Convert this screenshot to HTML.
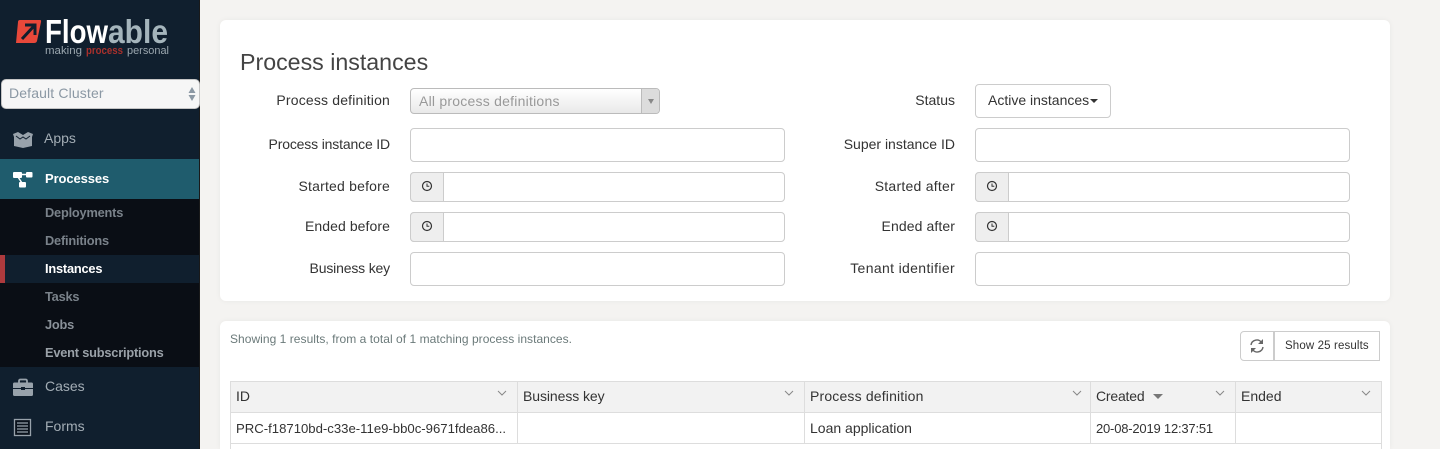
<!DOCTYPE html>
<html><head><meta charset="utf-8">
<style>
*{box-sizing:border-box}
html,body{margin:0;padding:0}
body{width:1440px;height:449px;overflow:hidden;position:relative;background:#f4f3f1;font-family:"Liberation Sans",sans-serif;font-size:14px;color:#333}
.a{position:absolute}
.t{position:absolute;white-space:nowrap;line-height:18px}
.r{text-align:right;width:180px}
.in{position:absolute;background:#fff;border:1px solid #ccc;border-radius:4px}
.nav{color:#a3adb5;font-size:14px}
.sub{font-size:12.8px;font-weight:bold;letter-spacing:-.2px;line-height:17px}
.addon{position:absolute;background:#eee;border:1px solid #ccc;border-radius:4px 0 0 4px;width:34px;height:30px}
.th{position:absolute;top:381px;height:32px;background:#f2f2f2;border:1px solid #ddd;font-size:14px;line-height:28px;padding-left:5px;color:#333}
.td{position:absolute;top:413px;height:31px;background:#fff;border-right:1px solid #ddd;border-bottom:1px solid #ddd;font-size:14px;line-height:31px;padding-left:5px;white-space:nowrap;overflow:hidden}
</style></head><body>
<div class="a" style="left:0;top:0;width:200px;height:449px;background:#101f2e"></div>
<div class="a" style="left:199px;top:0;width:1px;height:449px;background:#1a1a1a"></div>

<svg class="a" style="left:0;top:0" width="190" height="60" viewBox="0 0 190 60">
<path d="M20 20H40Q41.500 20 41 22L37 41Q36.500 43 34 43H16L18 22Q18 20 20 20Z" fill="#e8483a"/>
<path d="M22 39L34 26M25 25H35V35" fill="none" stroke="#101f2e" stroke-width="3"/>
<text x="45" y="43" font-family="Liberation Sans" font-weight="bold" font-size="33" fill="#fff" textLength="63" lengthAdjust="spacingAndGlyphs">Flow</text>
<text x="108" y="43" font-family="Liberation Sans" font-weight="bold" font-size="33" fill="#a5b5bc" textLength="60" lengthAdjust="spacingAndGlyphs">able</text>
<text x="45" y="54" font-family="Liberation Sans" font-size="11" fill="#9aa6ae" textLength="37" lengthAdjust="spacingAndGlyphs">making</text>
<text x="86" y="54" font-family="Liberation Sans" font-weight="bold" font-size="11" fill="#a8302c" textLength="37" lengthAdjust="spacingAndGlyphs">process</text>
<text x="127" y="54" font-family="Liberation Sans" font-size="11" fill="#9aa6ae" textLength="42" lengthAdjust="spacingAndGlyphs">personal</text>
</svg>

<div class="a" style="left:1px;top:79px;width:199px;height:30px;background:#f6f6f6;border:1px solid #c5c5c5;border-radius:5px"></div>
<div class="t" style="left:9px;top:84px;color:#8b98a4;font-size:14px;letter-spacing:.14px">Default Cluster</div>
<svg class="a" style="left:187px;top:86px" width="10" height="16"><path d="M5 1L8.500 7H1.500Z M5 15L8.500 9H1.500Z" fill="#8b98a4"/></svg>

<svg class="a" style="left:12px;top:131px" width="22" height="18"><path d="M1 3L6 1L11 4L16 1L21 3L20 6V15L11 17L2 15V6Z" fill="#98a2ab"/><path d="M4 5L8 8L11 6L14 8L18 5" stroke="#101f2e" stroke-width="1" fill="none"/></svg>
<div class="t nav" style="left:44px;top:129px">Apps</div>

<div class="a" style="left:0;top:159px;width:199px;height:40px;background:#1f5c6d"></div>
<svg class="a" style="left:12px;top:170px" width="22" height="20"><rect x="1" y="2" width="9" height="6" rx="1" fill="#fff"/><rect x="14" y="2" width="6.500" height="5.500" rx="1" fill="#fff"/><rect x="7" y="12" width="7" height="5.500" rx="1" fill="#fff"/><path d="M8 4.500H16M6 7L10 13" stroke="#fff" stroke-width="1.500"/></svg>
<div class="t" style="left:45px;top:170px;color:#fff;font-size:13px;font-weight:bold;letter-spacing:-.1px">Processes</div>

<div class="a" style="left:0;top:199px;width:199px;height:168px;background:#0a0e15"></div>
<div class="a" style="left:0;top:255px;width:199px;height:28px;background:#101f2e"></div>
<div class="a" style="left:0;top:255px;width:5px;height:28px;background:#ad3a3d"></div>
<div class="t sub" style="left:45px;top:204px;color:#7a828a">Deployments</div>
<div class="t sub" style="left:45px;top:232px;color:#7a828a">Definitions</div>
<div class="t sub" style="left:45px;top:260px;color:#fff">Instances</div>
<div class="t sub" style="left:45px;top:288px;color:#7a828a">Tasks</div>
<div class="t sub" style="left:45px;top:316px;color:#8a9199">Jobs</div>
<div class="t sub" style="left:45px;top:344px;color:#9aa1a8">Event subscriptions</div>

<svg class="a" style="left:12px;top:378px" width="22" height="19"><path d="M7 5V3Q7 1.500 8.500 1.500H13.500Q15 1.500 15 3V5" fill="none" stroke="#98a2ab" stroke-width="1.800"/><rect x="1" y="4.500" width="20" height="13.500" rx="1.500" fill="#98a2ab"/><rect x="1" y="10" width="20" height="1" fill="#101f2e"/><rect x="9" y="9" width="4" height="3" fill="#101f2e"/></svg>
<div class="t nav" style="left:45px;top:377px">Cases</div>
<svg class="a" style="left:13px;top:418px" width="20" height="19"><rect x="1.500" y="1.500" width="16" height="16" fill="#0a121c" stroke="#98a2ab" stroke-width="1.300"/><path d="M4 5H15M4 8H15M4 11H15M4 14H15" stroke="#98a2ab" stroke-width="1.200"/></svg>
<div class="t nav" style="left:45px;top:417px">Forms</div>

<div class="a" style="left:220px;top:20px;width:1170px;height:281px;background:#fff;border-radius:6px;box-shadow:0 0 6px rgba(0,0,0,.05)"></div>
<div class="t" style="left:240px;top:47px;font-size:23.200px;line-height:30px;color:#444">Process instances</div>

<div class="t r" style="left:210px;top:91px;letter-spacing:.17px">Process definition</div>
<div class="a" style="left:410px;top:88px;width:250px;height:26px;border:1px solid #bbb;border-radius:4px;background:linear-gradient(#fff,#e9e9e9)"></div>
<div class="a" style="left:641px;top:89px;width:18px;height:24px;border-left:1px solid #bbb;background:#dcdcdc;border-radius:0 3px 3px 0"></div>
<svg class="a" style="left:647px;top:98px" width="8" height="7"><path d="M1 1H7L4 6Z" fill="#888"/></svg>
<div class="t" style="left:419px;top:92px;color:#999;letter-spacing:.23px">All process definitions</div>

<div class="t r" style="left:775px;top:91px">Status</div>
<div class="in" style="left:975px;top:84px;width:136px;height:34px"></div>
<div class="t" style="left:988px;top:91px">Active instances</div>
<svg class="a" style="left:1090px;top:99px" width="9" height="5"><path d="M0 0H8L4 4Z" fill="#333"/></svg>

<div class="t r" style="left:210px;top:135px;letter-spacing:-.16px">Process instance ID</div>
<div class="in" style="left:410px;top:128px;width:375px;height:34px"></div>
<div class="t r" style="left:775px;top:135px">Super instance ID</div>
<div class="in" style="left:975px;top:128px;width:375px;height:34px"></div>

<div class="t r" style="left:210px;top:177px;letter-spacing:.2px">Started before</div>
<div class="in" style="left:410px;top:172px;width:375px;height:30px"></div>
<div class="addon" style="left:410px;top:172px"></div>
<svg class="a" style="left:421px;top:180px" width="12" height="12"><circle cx="6" cy="6" r="4.500" fill="none" stroke="#333" stroke-width="1.200"/><path d="M6 3.500V6.200H8.300" fill="none" stroke="#333"/></svg>
<div class="t r" style="left:775px;top:177px;letter-spacing:.25px">Started after</div>
<div class="in" style="left:975px;top:172px;width:375px;height:30px"></div>
<div class="addon" style="left:975px;top:172px"></div>
<svg class="a" style="left:986px;top:180px" width="12" height="12"><circle cx="6" cy="6" r="4.500" fill="none" stroke="#333" stroke-width="1.200"/><path d="M6 3.500V6.200H8.300" fill="none" stroke="#333"/></svg>

<div class="t r" style="left:210px;top:217px;letter-spacing:.08px">Ended before</div>
<div class="in" style="left:410px;top:212px;width:375px;height:30px"></div>
<div class="addon" style="left:410px;top:212px"></div>
<svg class="a" style="left:421px;top:220px" width="12" height="12"><circle cx="6" cy="6" r="4.500" fill="none" stroke="#333" stroke-width="1.200"/><path d="M6 3.500V6.200H8.300" fill="none" stroke="#333"/></svg>
<div class="t r" style="left:775px;top:217px;letter-spacing:.1px">Ended after</div>
<div class="in" style="left:975px;top:212px;width:375px;height:30px"></div>
<div class="addon" style="left:975px;top:212px"></div>
<svg class="a" style="left:986px;top:220px" width="12" height="12"><circle cx="6" cy="6" r="4.500" fill="none" stroke="#333" stroke-width="1.200"/><path d="M6 3.500V6.200H8.300" fill="none" stroke="#333"/></svg>

<div class="t r" style="left:210px;top:259px;letter-spacing:-.17px">Business key</div>
<div class="in" style="left:410px;top:252px;width:375px;height:34px"></div>
<div class="t r" style="left:775px;top:259px;letter-spacing:.35px">Tenant identifier</div>
<div class="in" style="left:975px;top:252px;width:375px;height:34px"></div>

<div class="a" style="left:220px;top:321px;width:1170px;height:128px;background:#fff;border-radius:6px 6px 0 0;box-shadow:0 0 6px rgba(0,0,0,.05)"></div>
<div class="t" style="left:230px;top:330px;font-size:12px;color:#6b7a7a;letter-spacing:.04px">Showing 1 results, from a total of 1 matching process instances.</div>

<div class="in" style="left:1240px;top:331px;width:34px;height:30px;border-radius:4px 0 0 4px"></div>
<svg class="a" style="left:1249px;top:338px" width="16" height="16"><path d="M2 7A5.800 5.800 0 0 1 12.500 4.500M14 9A5.800 5.800 0 0 1 3.500 11.500" fill="none" stroke="#666" stroke-width="1.400"/><path d="M14 1V6H9ZM2 15V10H7Z" fill="#666"/></svg>
<div class="in" style="left:1274px;top:331px;width:106px;height:30px;border-radius:0"></div>
<div class="t" style="left:1285px;top:337px;font-size:11.500px;letter-spacing:.13px">Show 25 results</div>

<div class="th" style="left:230px;width:288px">ID</div>
<div class="th" style="left:517px;width:288px;letter-spacing:-.08px">Business key</div>
<div class="th" style="left:804px;width:287px;letter-spacing:.17px">Process definition</div>
<div class="th" style="left:1090px;width:146px;letter-spacing:-.2px">Created</div>
<div class="th" style="left:1235px;width:147px">Ended</div>
<svg class="a" style="left:230px;top:388px" width="1152" height="12" fill="none" stroke="#888"><path d="M268 3L272 7L276 3M555 3L559 7L563 3M843 3L847 7L851 3M986 3L990 7L994 3M1132 3L1136 7L1140 3"/><path d="M923 6H933L928 11Z" fill="#777" stroke="none"/></svg>

<div class="a" style="left:230px;top:413px;width:1152px;height:36px;background:#fff;border-left:1px solid #ddd;border-right:1px solid #ddd"></div>
<div class="td" style="left:231px;width:287px;font-size:13.150px">PRC-f18710bd-c33e-11e9-bb0c-9671fdea86...</div>
<div class="td" style="left:518px;width:287px"></div>
<div class="td" style="left:805px;width:286px">Loan application</div>
<div class="td" style="left:1091px;width:145px;font-size:13px;letter-spacing:-.2px">20-08-2019 12:37:51</div>
<div class="td" style="left:1236px;width:145px;border-right:0"></div>
</body></html>
